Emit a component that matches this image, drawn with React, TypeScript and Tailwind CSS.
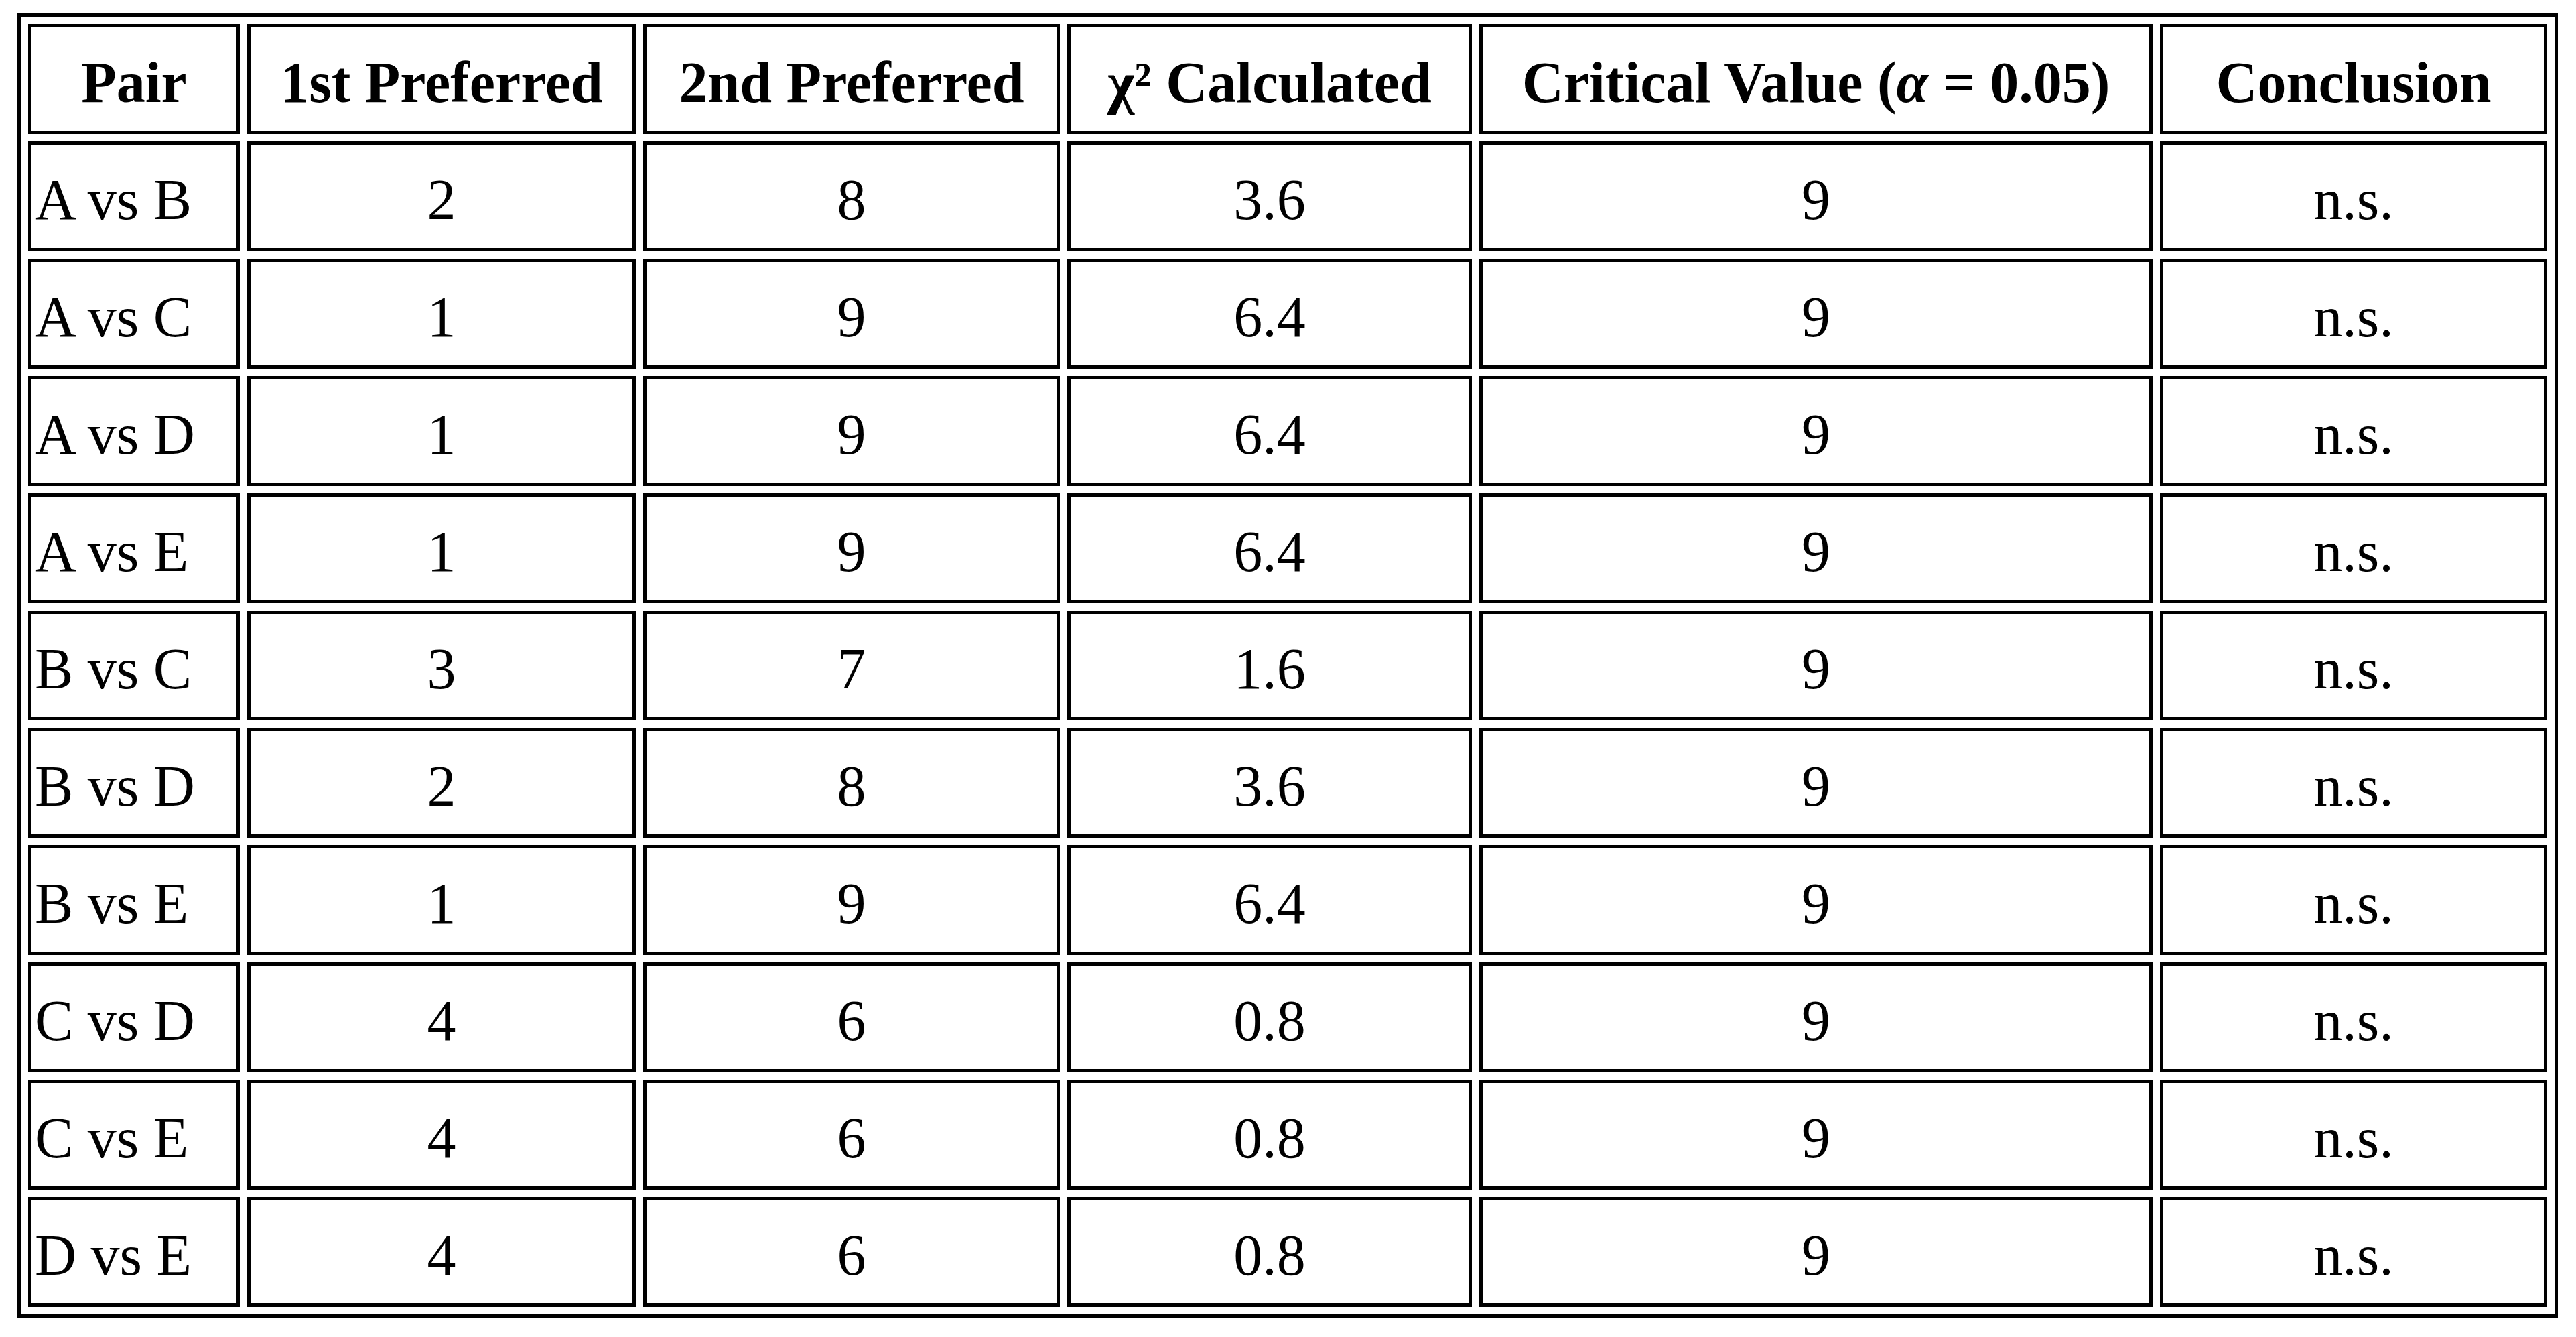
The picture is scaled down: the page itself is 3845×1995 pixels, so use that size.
import React from 'react';

const rows = [
  ["A vs B", "2", "8", "3.6"],
  ["A vs C", "1", "9", "6.4"],
  ["A vs D", "1", "9", "6.4"],
  ["A vs E", "1", "9", "6.4"],
  ["B vs C", "3", "7", "1.6"],
  ["B vs D", "2", "8", "3.6"],
  ["B vs E", "1", "9", "6.4"],
  ["C vs D", "4", "6", "0.8"],
  ["C vs E", "4", "6", "0.8"],
  ["D vs E", "4", "6", "0.8"],
];

const cell = "border-[5px] border-solid border-black h-[164px] pt-[12px] pb-0 align-middle";

const App: React.FC = () => {
  return (
    <div className="bg-white min-h-screen pt-[20px] pl-[26px] text-black" style={{ fontFamily: '"Liberation Serif", "Times New Roman", serif' }}>
      <table className="table-fixed border-separate border-spacing-[11px] border-[5px] border-solid border-black w-[3792px] text-[86px] leading-[1.107]">
        <colgroup>
          <col className="w-[316px]" />
          <col className="w-[580px]" />
          <col className="w-[622px]" />
          <col className="w-[604px]" />
          <col className="w-[1005px]" />
          <col className="w-[578px]" />
        </colgroup>
        <thead>
          <tr>
            <th className={`${cell} font-bold text-center px-[5px]`}>Pair</th>
            <th className={`${cell} font-bold text-center px-[5px]`}>1st Preferred</th>
            <th className={`${cell} font-bold text-center px-[5px]`}>2nd Preferred</th>
            <th className={`${cell} font-bold text-center px-[5px]`}>χ² Calculated</th>
            <th className={`${cell} font-bold text-center px-[5px]`}>Critical Value (<i>α</i> = 0.05)</th>
            <th className={`${cell} font-bold text-center px-[5px]`}>Conclusion</th>
          </tr>
        </thead>
        <tbody>
          {rows.map((r) => (
            <tr key={r[0]}>
              <td className={`${cell} text-left pl-[5px] pr-[5px]`}>{r[0]}</td>
              <td className={`${cell} text-center px-[5px]`}>{r[1]}</td>
              <td className={`${cell} text-center px-[5px]`}>{r[2]}</td>
              <td className={`${cell} text-center px-[5px]`}>{r[3]}</td>
              <td className={`${cell} text-center px-[5px]`}>9</td>
              <td className={`${cell} text-center px-[5px]`}>n.s.</td>
            </tr>
          ))}
        </tbody>
      </table>
    </div>
  );
};

export default App;
